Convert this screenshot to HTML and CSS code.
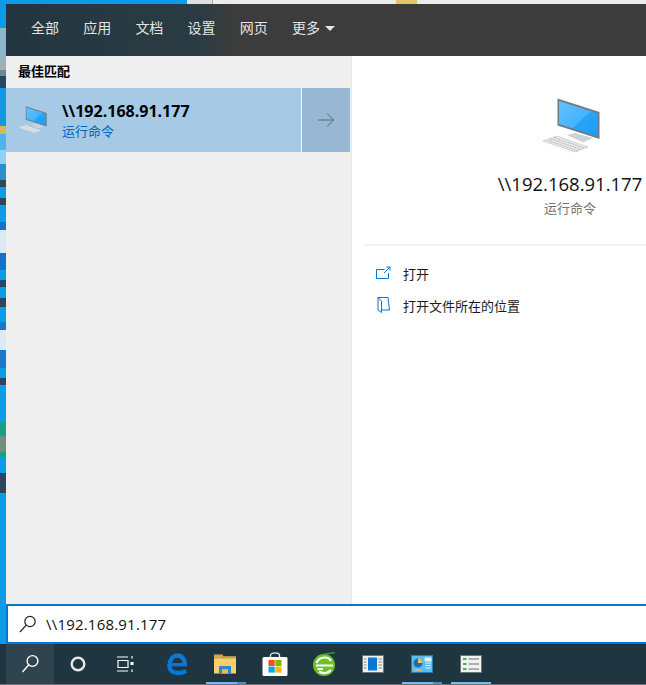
FILE: index.html
```html
<!DOCTYPE html>
<html lang="zh-CN">
<head>
    <meta charset="UTF-8">
    <title>搜索</title>
    <link rel="stylesheet" href="styles.css">
</head>
<body>
    <svg class="defs" width="0" height="0">
        <defs>
            <linearGradient id="screenFill" x1="0" y1="0" x2="1" y2="1">
                <stop offset="0" stop-color="#62c1ff"/>
                <stop offset="0.55" stop-color="#46b3fd"/>
                <stop offset="0.56" stop-color="#28a4f8"/>
                <stop offset="1" stop-color="#1f9bf2"/>
            </linearGradient>
            <symbol id="pc" viewBox="0 0 64 60">
                <polygon points="17.5,2.5 59.5,16 59.5,43 17.5,29.5" fill="#6f7c85"/>
                <polygon points="19,5 58,17.5 58,40.5 19,28" fill="url(#screenFill)"/>
                <polygon points="35,38 44,41 44,43 35,40" fill="#aab4ba"/>
                <polygon points="27,39 35,37 53,42 43,46.5" fill="#ccd3d8"/>
                <polygon points="3,45 17,40 48,51 35,56" fill="#e8ebed" stroke="#b9bec2" stroke-width="0.6"/>
                <path d="M8 44.5 38 55M11 43 41 53.5M14 41.5 44 52" stroke="#a6acb1" stroke-width="0.9" stroke-dasharray="1.6 0.9" fill="none"/>
            </symbol>
        </defs>
    </svg>

    <div class="top-strip">
        <span class="strip-blue"></span>
        <span class="strip-grey"></span>
        <span class="strip-light"></span>
        <span class="strip-yellow"></span>
        <span class="strip-rest"></span>
    </div>

    <div class="middle">
        <div class="desktop-edge"></div>
        <div class="window">
            <nav class="tabs">
                <a class="tab">全部</a>
                <a class="tab">应用</a>
                <a class="tab">文档</a>
                <a class="tab">设置</a>
                <a class="tab">网页</a>
                <a class="tab">更多<span class="caret"></span></a>
            </nav>

            <div class="panels">
                <section class="results">
                    <h2 class="results-title">最佳匹配</h2>
                    <div class="result">
                        <div class="result-main">
                            <svg class="result-icon"><use href="#pc"/></svg>
                            <div>
                                <div class="result-name">\\192.168.91.177</div>
                                <div class="result-type">运行命令</div>
                            </div>
                        </div>
                        <div class="result-arrow">
                            <svg width="18" height="16" viewBox="0 0 18 16" fill="none" stroke="#55697c" stroke-width="1">
                                <path d="M1 8H16.5M10 1.5 16.5 8 10 14.5"/>
                            </svg>
                        </div>
                    </div>
                </section>

                <section class="details">
                    <div class="details-head">
                        <svg class="details-icon"><use href="#pc"/></svg>
                        <div class="details-name">\\192.168.91.177</div>
                        <div class="details-type">运行命令</div>
                    </div>
                    <ul class="actions">
                        <li class="action">
                            <svg width="16" height="14" viewBox="0 0 16 14" fill="none" stroke="#0078d7" stroke-width="1">
                                <path d="M9.5 3.5H1.5V12.5H13.5V7M9 7 15 1M11.5 1H15V4.5"/>
                            </svg>
                            打开
                        </li>
                        <li class="action">
                            <svg width="16" height="18" viewBox="0 0 16 18" fill="none" stroke="#0078d7" stroke-width="1">
                                <path d="M3 1.5H13L14.5 14H8M3 1.5V14L6.5 16.5V5L3 1.5ZM6.5 14H8"/>
                            </svg>
                            打开文件所在的位置
                        </li>
                    </ul>
                </section>
            </div>

            <div class="search-box">
                <svg width="20" height="20" viewBox="0 0 20 20" fill="none" stroke="#222" stroke-width="1.2">
                    <circle cx="12" cy="7.5" r="5.2"/>
                    <path d="M8.2 11.2 2 18"/>
                </svg>
                <span class="search-text">\\192.168.91.177</span>
            </div>
        </div>
    </div>

    <footer class="taskbar">
        <div class="task task-narrow task-active">
            <svg width="24" height="24" viewBox="0 0 24 24" fill="none" stroke="#fff" stroke-width="1.4">
                <circle cx="14.5" cy="9" r="5.4"/>
                <path d="M10.6 13 4.5 20"/>
            </svg>
        </div>
        <div class="task task-narrow">
            <svg width="24" height="24" viewBox="0 0 24 24" fill="none" stroke="#e8e8e8" stroke-width="2.4">
                <circle cx="12" cy="12" r="6.3"/>
            </svg>
        </div>
        <div class="task task-narrow">
            <svg width="24" height="24" viewBox="1 0 24 24" fill="none" stroke="#fff" stroke-width="1.2">
                <path d="M4 5H15M4 19H15M5 8.5H15V15.5H5ZM19 4V6.5M19 17.5V20"/>
                <rect x="17.5" y="10" width="3" height="3" fill="#fff" stroke="none"/>
            </svg>
        </div>
        <div class="task task-narrow task-gap">
            <svg width="24" height="24" viewBox="0 0 24 24" fill="none" stroke="#0a78d7">
                <path d="M20 13C20 7 16.5 3.5 12.5 3.5C8 3.5 5 7.5 4.5 13C4 18.5 8 21 13 21C16 21 18.5 20.3 21 18.8" stroke-width="4.4"/>
                <path d="M6 12.7H22" stroke-width="3.4"/>
            </svg>
        </div>
        <div class="task task-narrow">
            <svg width="24" height="24" viewBox="0 0 24 24">
                <rect x="1" y="2.5" width="9" height="3" fill="#e0a526"/>
                <rect x="1" y="4.5" width="22" height="17" fill="#f6d16b"/>
                <rect x="1" y="4.5" width="22" height="2" fill="#c9a24a"/>
                <path d="M6 21.5V14H18V21.5H15V17.5H9V21.5Z" fill="#2d86cf"/>
                <rect x="9" y="17.5" width="6" height="4" fill="#f3b93f"/>
            </svg>
        </div>
        <div class="task task-store">
            <svg width="28" height="26" viewBox="0 0 28 26">
                <path d="M9.5 8V4.5C9.5 1 18.5 1 18.5 4.5V8" fill="none" stroke="#e8e8e8" stroke-width="1.4"/>
                <rect x="1.5" y="6" width="25" height="19" rx="1.5" fill="#fff"/>
                <rect x="7.5" y="9" width="6.2" height="6" fill="#f25022"/>
                <rect x="14.3" y="9" width="6.2" height="6" fill="#7fba00"/>
                <rect x="7.5" y="15.6" width="6.2" height="6" fill="#00a4ef"/>
                <rect x="14.3" y="15.6" width="6.2" height="6" fill="#ffb900"/>
            </svg>
        </div>
        <div class="task">
            <svg width="26" height="26" viewBox="0 0 26 26">
                <circle cx="13" cy="14" r="11" fill="#6ebf2c"/>
                <path d="M13 3C18 3 23 1 24 2" fill="none" stroke="#3f9a20" stroke-width="1.5"/>
                <path d="M5.5 12C7 8 11 6.5 14 6.5C17 6.5 19 8 20 10M5 14.5H22M6.5 18H12M8 20.5C12 23 17 22.5 20 19" fill="none" stroke="#fff" stroke-width="2.2"/>
            </svg>
        </div>
        <div class="task">
            <svg width="24" height="20" viewBox="0 0 24 20">
                <rect x="1.5" y="1.5" width="21" height="17" fill="#f0f0f0" stroke="#6d7478"/>
                <rect x="7" y="3.5" width="9" height="13" fill="#0a78d7"/>
                <path d="M3 5H5.5M3 8H5.5M3 11H5.5M3 14H5.5M17.5 5H21M17.5 8H21M17.5 11H21M17.5 14H21" stroke="#a9a9a9" stroke-width="1.6"/>
            </svg>
        </div>
        <div class="task">
            <svg width="24" height="20" viewBox="0 0 24 20">
                <rect x="1.5" y="1.5" width="21" height="17" fill="#5cbcf2" stroke="#2f7db0"/>
                <circle cx="8" cy="9" r="4.5" fill="#1d6fb5"/>
                <path d="M8 9V4.5A4.5 4.5 0 0 1 12.5 9Z" fill="#f4c542"/>
                <path d="M15 4H21V7H15ZM15.5 9H21M15.5 11.5H21M15.5 14H21" fill="#d8f0fb" stroke="#d8f0fb"/>
                <path d="M4 16H12" stroke="#f4c542" stroke-width="1.2"/>
            </svg>
        </div>
        <div class="task">
            <svg width="24" height="20" viewBox="0 0 24 20">
                <rect x="1.5" y="1.5" width="21" height="17" fill="#f2f2f2" stroke="#6d7478"/>
                <path d="M4 5H7.5M4 10H7.5M4 15H7.5" stroke="#4caf50" stroke-width="2"/>
                <path d="M9.5 5H20M9.5 10H20M9.5 15H20" stroke="#9a9a9a" stroke-width="1.4"/>
            </svg>
        </div>
        <span class="run-mark run-explorer"></span>
        <span class="run-mark run-app2"></span>
        <span class="run-mark run-app3"></span>
    </footer>
</body>
</html>
```

FILE: styles.css
```css
* {
    box-sizing: border-box;
}

html, body {
    height: 100%;
}

body {
    margin: 0;
    display: flex;
    flex-direction: column;
    overflow: hidden;
    font-family: "Open Sans", "Noto Sans CJK SC", sans-serif;
    background-color: #0c9be6;
}

.defs {
    position: absolute;
}

/* what is left of the desktop behind the search window */
.top-strip {
    height: 4px;
    display: flex;
    flex: none;
}

.strip-blue {
    width: 187px;
    background-color: #0c9be6;
}

.strip-grey {
    width: 26px;
    background-color: #dfdfdf;
    border-right: 1px solid #a9a9a9;
}

.strip-light {
    width: 183px;
    background-color: #ececec;
}

.strip-yellow {
    width: 21px;
    background-color: #e6c566;
}

.strip-rest {
    flex: 1;
    background-color: #ececec;
}

.middle {
    flex: 1;
    display: flex;
    min-height: 0;
}

.desktop-edge {
    width: 6px;
    flex: none;
    background-image: linear-gradient(
        #0c9be6 0 24px,
        #8db6cc 24px 56px,
        #a0aeb6 56px 66px,
        #6d8796 66px 72px,
        #2b4660 72px 84px,
        #1098e2 84px 122px,
        #d9b84e 122px 130px,
        #4fb5e8 130px 146px,
        #8cd3f3 146px 160px,
        #2a8fd0 160px 176px,
        #2b4660 176px 183px,
        #0f9ce6 183px 194px,
        #2b4660 194px 201px,
        #0f9ce6 201px 218px,
        #1273c8 218px 226px,
        #dce9f5 226px 249px,
        #1273c8 249px 266px,
        #0f9ce6 266px 276px,
        #2b4660 276px 283px,
        #0f9ce6 283px 294px,
        #2b4660 294px 303px,
        #0f9ce6 303px 318px,
        #1a78c8 318px 326px,
        #dce9f5 326px 346px,
        #1a78c8 346px 364px,
        #0f9ce6 364px 374px,
        #2b4660 374px 381px,
        #0f9ce6 381px 418px,
        #1b9e86 418px 432px,
        #6f8f80 432px 448px,
        #1b9e86 448px 453px,
        #0f9ce6 453px 469px,
        #2b4660 469px 489px,
        #0f9ce6 489px
    );
}

.window {
    flex: 1;
    min-width: 0;
    display: flex;
    flex-direction: column;
}

.tabs {
    height: 52px;
    flex: none;
    display: flex;
    align-items: center;
    gap: 24.2px;
    padding-left: 25px;
    padding-bottom: 6px;
    background: linear-gradient(90deg, #23363f 0, #2a3b43 190px, #3c3c3c 230px);
}

.tab {
    font-size: 14px;
    color: #e4e4e4;
    display: flex;
    align-items: center;
}

.caret {
    width: 0;
    height: 0;
    margin-left: 5px;
    margin-top: 2px;
    border-left: 5px solid transparent;
    border-right: 5px solid transparent;
    border-top: 5px solid #e4e4e4;
}

.panels {
    flex: 1;
    display: grid;
    grid-template-columns: 345px 1fr;
    min-height: 0;
}

.results {
    background-color: #efefef;
}

.results-title {
    margin: 0;
    height: 32px;
    padding-left: 12px;
    line-height: 30px;
    font-size: 13px;
    font-weight: 700;
    color: #000;
}

.result {
    height: 64px;
    width: 344px;
    display: flex;
}

.result-main {
    flex: 1;
    display: flex;
    align-items: center;
    padding-left: 11px;
    background-color: #a6cae6;
}

.result-icon {
    width: 32px;
    height: 30px;
    margin-right: 13px;
}

.result-name {
    font-size: 16px;
    font-weight: 700;
    line-height: 22px;
    color: #000;
}

.result-type {
    font-size: 13px;
    line-height: 18px;
    color: #0067c0;
}

.result-arrow {
    width: 49px;
    display: flex;
    align-items: center;
    justify-content: center;
    background-color: #97b7d3;
    border-left: 1px solid #f0f6fb;
}

.details {
    background-color: #fff;
    border-left: 1px solid #e6e6e6;
    padding-left: 12px;
    overflow: hidden;
}

/* the panel runs on past the edge of the screenshot, so its head is centred further right */
.details-head {
    height: 190px;
    padding-top: 40px;
    border-bottom: 2px solid #f2f2f2;
    display: flex;
    flex-direction: column;
    align-items: center;
    margin-right: -130px;
}

.details-icon {
    width: 64px;
    height: 60px;
    margin-left: 4px;
}

.details-name {
    margin-top: 14px;
    font-size: 18.5px;
    line-height: 28px;
    color: #111;
}

.details-type {
    margin-top: 1px;
    font-size: 13px;
    line-height: 18px;
    color: #767676;
}

.actions {
    list-style: none;
    margin: 0;
    padding: 11px 0 0 11px;
}

.action {
    height: 32px;
    display: flex;
    align-items: center;
    gap: 12px;
    font-size: 13px;
    color: #1a1a1a;
}

.search-box {
    height: 40px;
    flex: none;
    display: flex;
    align-items: center;
    gap: 8px;
    padding-left: 10px;
    background-color: #fff;
    border-top: 2px solid #0078d7;
    border-bottom: 2px solid #0078d7;
    border-left: 2px solid #0078d7;
}

.search-text {
    font-size: 15px;
    letter-spacing: 0.2px;
    color: #111;
}

.taskbar {
    position: relative;
    height: 41px;
    flex: none;
    display: flex;
    padding-left: 6px;
    background-color: #1f3540;
    border-bottom: 1px solid #6b7478;
}

.task {
    width: 49px;
    display: flex;
    align-items: center;
    justify-content: center;
}

.task-narrow {
    width: 48px;
}

.task-active {
    background-color: #2f444e;
}

.task-gap {
    margin-left: 3px;
}

.task-store {
    margin-left: 1px;
}

/* small bars under the programs that are running */
.run-mark {
    position: absolute;
    bottom: 0;
    height: 2px;
    background-color: #76b9ed;
}

.run-explorer {
    left: 206px;
    width: 40px;
    background-image: linear-gradient(90deg, #76b9ed 31px, #4f8fc4 31px);
}

.run-app2 {
    left: 402px;
    width: 40px;
    background-image: linear-gradient(90deg, #76b9ed 31px, #4f8fc4 31px);
}

.run-app3 {
    left: 451px;
    width: 40px;
}
```
